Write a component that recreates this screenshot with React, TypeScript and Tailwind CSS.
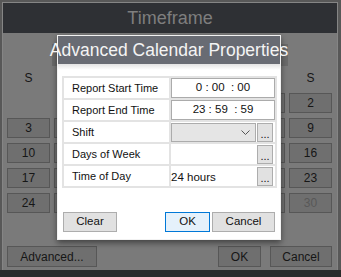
import React from "react";

const font = "font-['Liberation_Sans',Arial,sans-serif]";

type Day = { n?: number; dim?: boolean };

const weeks: Day[][] = [
  [{}, {}, {}, {}, {}, { n: 1 }, { n: 2 }],
  [3, 4, 5, 6, 7, 8, 9].map((n) => ({ n })),
  [10, 11, 12, 13, 14, 15, 16].map((n) => ({ n })),
  [17, 18, 19, 20, 21, 22, 23].map((n) => ({ n })),
  [{ n: 24 }, { n: 25 }, { n: 26 }, { n: 27 }, { n: 28 }, { n: 29 }, { n: 30, dim: true }],
];

const dayNames = ["S", "M", "T", "W", "T", "F", "S"];

function BgButton({ label, w }: { label: string; w: string }) {
  return (
    <div
      className={`${w} h-[21px] flex items-center justify-center border border-[#575757] bg-[#6f6f6f] text-[12px] text-[#161616]`}
    >
      {label}
    </div>
  );
}

function DotsButton() {
  return (
    <div className="w-[16px] h-[19px] flex items-center justify-center border border-[#adadad] bg-[#e1e1e1]">
      <span className="text-[11px] leading-[11px] pt-[4px] text-[#111]">...</span>
    </div>
  );
}

function Row({ label, children }: { label: string; children?: React.ReactNode }) {
  return (
    <>
      <div className="bg-white h-[20px] flex items-center pl-[8px]">
        <span className="text-[11px] leading-[13px] text-[#111]">{label}</span>
      </div>
      <div className="bg-white h-[20px] flex items-center">{children}</div>
    </>
  );
}

export default function App() {
  return (
    <div className={`relative w-[341px] h-[277px] overflow-hidden bg-[#585858] ${font}`}>
      {/* background dialog, dimmed */}
      <div className="ml-[2px] pt-[2px] w-[336px]">
        <div className="h-[268px] bg-[#7a7a7a] flex flex-col border-x border-t border-[#858585]">
          <div className="h-[30px] bg-[#2e3034] flex items-center justify-center text-[18px] text-[#7e7e7e]">
            Timeframe
          </div>
          <div className="flex justify-center mt-[11px]">
            <div className="w-[236px] h-[22px] bg-[#6a6a6a]" />
          </div>
          <div className="pl-[4px] mt-[2px]">
            <div className="grid grid-cols-[repeat(7,43px)] gap-x-[4px]">
              {dayNames.map((d, i) => (
                <div key={i} className="h-[20px] flex items-center justify-center text-[12px] text-[#161616]">
                  {d}
                </div>
              ))}
            </div>
            <div className="mt-[5px] grid grid-cols-[repeat(7,43px)] gap-x-[4px] gap-y-[5px]">
              {weeks.flat().map((d, i) =>
                d.n ? (
                  <div
                    key={i}
                    className={`h-[20px] flex items-center justify-center border border-[#575757] bg-[#6f6f6f] text-[12px] ${
                      d.dim ? "text-[#585858]" : "text-[#161616]"
                    }`}
                  >
                    {d.n}
                  </div>
                ) : (
                  <div key={i} className="h-[20px]" />
                )
              )}
            </div>
          </div>
          <div className="mt-[33px] pl-[4px] pr-[5px] flex">
            <BgButton label="Advanced..." w="w-[90px]" />
            <div className="flex-1" />
            <BgButton label="OK" w="w-[43px]" />
            <div className="w-[9px]" />
            <BgButton label="Cancel" w="w-[62px]" />
          </div>
        </div>
      </div>
      <div className="h-[7px] bg-[#2b2b2b]" />

      {/* modal */}
      <div className="absolute left-[57px] top-[35px] w-[224px] h-[205px] border border-[#f2f2f2] bg-white shadow-[0_3px_6px_rgba(0,0,0,0.45)] flex flex-col">
        <div className="h-[28px] bg-[#686b73] flex items-center justify-center">
          <span className="whitespace-nowrap text-[17.5px] text-[#f4f4f4]">Advanced Calendar Properties</span>
        </div>
        <div className="h-[6px] bg-gradient-to-b from-[#e2e2e2] to-white" />
        <div className="ml-[4px] mt-[6px] w-[215px] grid grid-cols-[105px_104px] gap-[2px] p-[2px] bg-[#e3e3e3]">
          <Row label="Report Start Time">
            <div className="w-full h-[20px] border border-[#ababab] flex items-center justify-center text-[11.5px] text-[#111] whitespace-pre">
              {"0 : 00  : 00"}
            </div>
          </Row>
          <Row label="Report End Time">
            <div className="w-full h-[20px] border border-[#ababab] flex items-center justify-center text-[11.5px] text-[#111] whitespace-pre">
              {"23 : 59  : 59"}
            </div>
          </Row>
          <Row label="Shift">
            <div className="w-[85px] h-[19px] border border-[#acacac] bg-[#e5e5e5] flex items-center justify-end pr-[5px]">
              <svg width="9" height="5" viewBox="0 0 9 5">
                <polyline points="0.5,0.5 4.5,4.5 8.5,0.5" fill="none" stroke="#555" strokeWidth="1" />
              </svg>
            </div>
            <div className="ml-[1px]">
              <DotsButton />
            </div>
          </Row>
          <Row label="Days of Week">
            <div className="flex-1" />
            <DotsButton />
            <div className="w-[2px]" />
          </Row>
          <Row label="Time of Day">
            <div className="flex-1">
              <span className="text-[11.5px] leading-[13px] text-[#111]">24 hours</span>
            </div>
            <DotsButton />
            <div className="w-[2px]" />
          </Row>
        </div>
        <div className="mt-[24px] px-[5px] flex text-[11.5px] text-[#111]">
          <div className="w-[54px] h-[20px] flex items-center justify-center border border-[#adadad] bg-[#e1e1e1]">
            Clear
          </div>
          <div className="flex-1" />
          <div className="w-[45px] h-[20px] flex items-center justify-center border border-[#0078d7] bg-[#e5f1fb]">
            OK
          </div>
          <div className="w-[2px]" />
          <div className="w-[63px] h-[20px] flex items-center justify-center border border-[#adadad] bg-[#e1e1e1]">
            Cancel
          </div>
        </div>
      </div>
    </div>
  );
}
